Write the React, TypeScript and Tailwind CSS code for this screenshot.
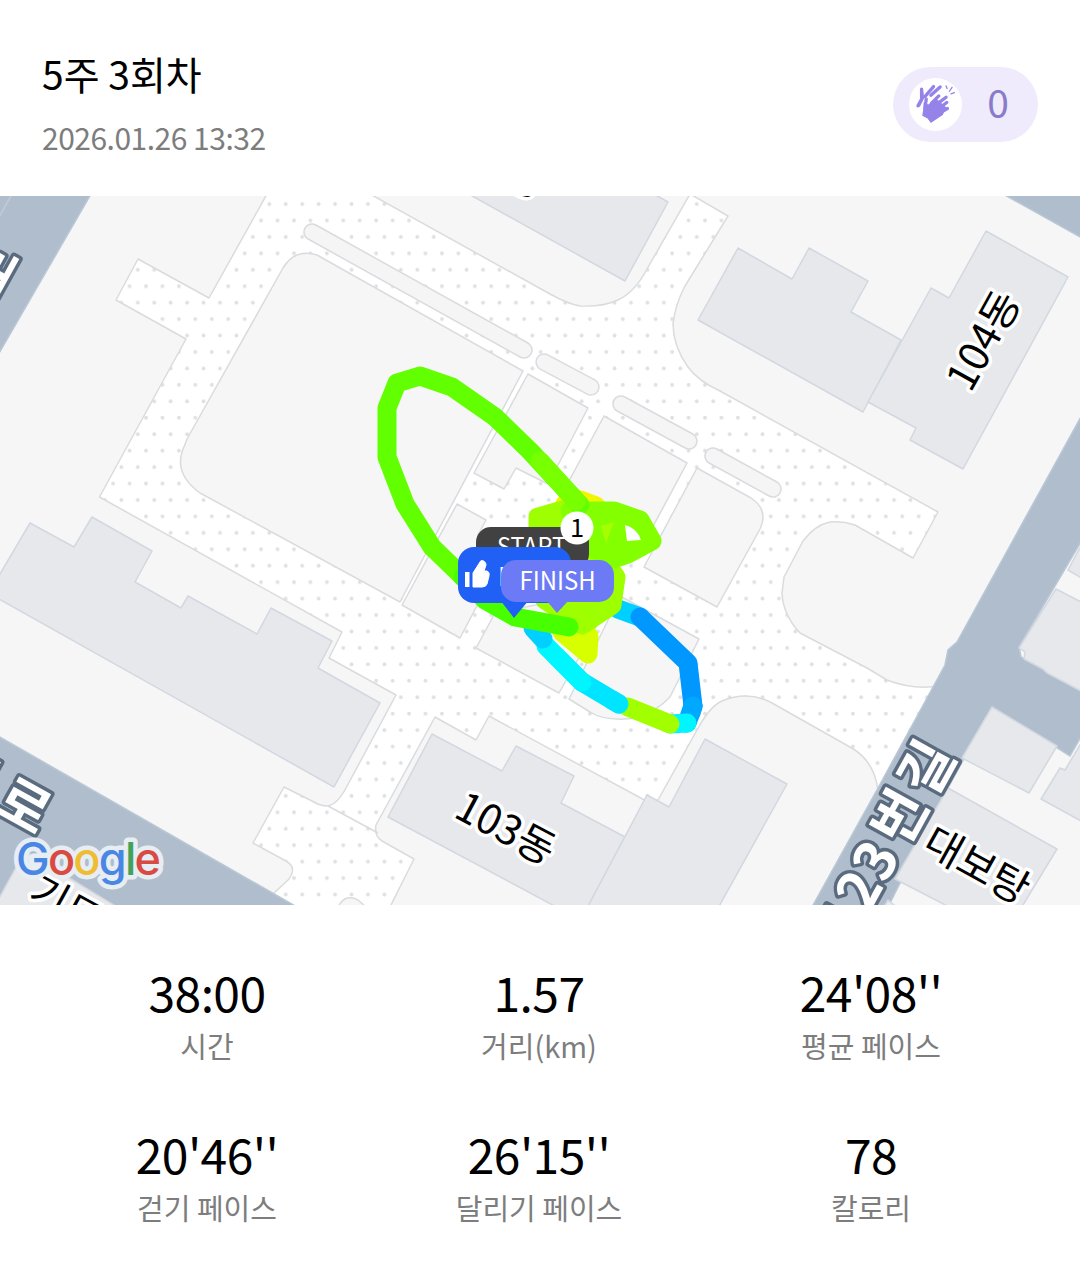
import type { ReactNode } from 'react';

const FONT = "font-['Noto_Sans_CJK_KR','Noto_Sans',sans-serif]";

const STATS = [
  { value: '38:00', label: '시간' },
  { value: '1.57', label: '거리(km)' },
  { value: "24'08''", label: '평균 페이스' },
  { value: "20'46''", label: '걷기 페이스' },
  { value: "26'15''", label: '달리기 페이스' },
  { value: '78', label: '칼로리' },
];

export default function App() {
  return (
    <main className={`flex h-[1267px] w-[1080px] flex-col bg-white text-black ${FONT}`}>
      <header className="flex h-[196px] items-start justify-between px-[42px] pt-11">
        <div>
          <h1 className="text-[39px] leading-[58px]">5주 3회차</h1>
          <p className="mt-[14px] text-[30px] leading-[42px] tracking-[-0.5px] text-[#7d7d7d]">2026.01.26 13:32</p>
        </div>
        <div className="mt-[23px] flex h-[75px] w-[145px] items-center rounded-full bg-[#efebfd] pl-4">
          <span className="flex size-[53px] items-center justify-center rounded-full bg-white">
            <ClapIcon />
          </span>
          <span className="w-[72px] pb-[7px] text-center text-[39px] leading-none text-[#8a7bc8]">0</span>
        </div>
      </header>

      <RouteMap />

      <section className="grid grid-cols-3 gap-y-[40px] pt-[52px] pr-[43px] pl-[41px]">
        {STATS.map((s) => (
          <div key={s.label} className="h-[122px] text-center">
            <div className="text-[48px] leading-[68px] tracking-[-0.6px]">{s.value}</div>
            <div className="text-[29px] leading-[40px] text-[#7d7d7d]">{s.label}</div>
          </div>
        ))}
      </section>
    </main>
  );
}

function ClapIcon() {
  return (
    <svg viewBox="0 0 160 160" className="size-[53px]" fill="none" strokeLinecap="round" strokeLinejoin="round">
      <g stroke="#9583ea" strokeWidth="10">
        <path d="M38 34V64L27 84" />
        <path d="M48 56L74 26M66 52L94 27" />
      </g>
      <path d="M42 34L46 60L32 88L28 80L36 60Z" fill="#9583ea" />
      <path d="M44 88V74L58 80L82 62L112 88L102 112L86 122L66 136L56 122L40 114Z" fill="#9583ea" />
      <g stroke="#9583ea" strokeWidth="10">
        <path d="M48 92L52 64M68 76L90 54M80 82L112 58M90 92L114 74M92 106L116 92" />
      </g>
      <path d="M112 24L115 32M122 40L130 28M127 48L137 44" stroke="#9583ea" strokeWidth="4" />
    </svg>
  );
}

function RouteMap() {
  return (
    <svg viewBox="0 196 1080 709" className="h-[709px] w-[1080px] shrink-0">
      <defs>
        <pattern id="dots" x="261.1" y="195.8" width="16.44" height="32.88" patternUnits="userSpaceOnUse">
          <circle cx="8.22" cy="8.22" r="1.9" fill="#dee1e3" />
          <circle cx="0" cy="24.66" r="1.9" fill="#dee1e3" />
          <circle cx="16.44" cy="24.66" r="1.9" fill="#dee1e3" />
        </pattern>
      </defs>
      <rect y="196" width="1080" height="709" fill="#f6f6f6" />
      <Plaza />
      <Roads />
      <Buildings />
      <Labels />
      <Route />
      <Markers />
      <GoogleMark />
    </svg>
  );
}

const PLAZA =
  'M267 194L209 298L138 259L116 300L186 339L99.500 497L342 632L329 658L396 695L346 788Q337 805 327 806Q320 806 312 801L284 787L253 843L286 861Q298 868 288 880L273 894L293 907H338Q345 893 358 900L366 907H390L414 859L382 841Q374 836 376 825L435 717L476 740L489 716L650 803L658 800L697 730Q710 706 722 701Q748 690 772 703L850 747Q874 760 878 790L940 686Q912 690 887 680L867 668L800 633Q783 615 782 593L784 577L803 541Q815 525 830 522Q843 521 855 525L913 558L938 512L720 391Q698 381 688 367Q673 346 673 324Q675 305 685 286L728 216L690 194L647 269Q635 292 618 300Q603 307 580 306Q568 304 550 294L370 194Z';

const ISLANDS = [
  'M283 268Q295 248 317 255L523 371L400 602L200 493Q175 475 182 452L187 439Z',
  'M528 374L588 408L548 484L516 468L504 489L474 473Z',
  'M457 504L486 520L478 535L500 562L460 638L402 605Z',
  'M495 613L476 648L559 693L600 620L560 600Z',
  'M620 596L699 639L670 697Q658 710 637 718Q605 722 590 712L569 699Z',
  'M604 416L687 463L643 545L548 520Z',
  'M697 468L751 498Q769 510 760 529L717 607L644 567Z',
];

const PLANTERS = ['M312 232L524 350', 'M544 362L591 387', 'M621 404L689 441', 'M713 456L773 489'];

function Plaza() {
  return (
    <g strokeLinejoin="round">
      <path d={PLAZA} fill="#fff" />
      <path d={PLAZA} fill="url(#dots)" stroke="#d9dbde" strokeWidth="1.500" />
      <path d="M328 806L378 833" stroke="#d9dbde" strokeWidth="1.500" />
      {ISLANDS.map((d) => (
        <path key={d} d={d} fill="#f6f6f6" stroke="#d9dbde" strokeWidth="1.500" />
      ))}
      {PLANTERS.map((d) => (
        <g key={d} strokeLinecap="round">
          <path d={d} stroke="#d9dbde" strokeWidth="17.500" />
          <path d={d} stroke="#f5f5f5" strokeWidth="14.500" />
        </g>
      ))}
    </g>
  );
}

function Roads() {
  return (
    <g fill="#b0bdcc" stroke="#b9c8d6" strokeWidth="1.500">
      <path d="M-2 194H91L-2 355Z" />
      <path d="M1003 194H1082V238Z" />
      <path d="M1082 415L957 642L948 650L945 665L878 788L812 907H888L948 788L992 707L1070 756L1082 735V692L1021 657L1019 647L1082 540Z" />
      <path d="M-2 736L297 907H-2Z" />
      <path d="M12 194L-2 219" stroke="#c3ccd3" fill="none" />
    </g>
  );
}

const BUILDINGS = [
  'M465 192L625 281L668 202L650 192Z',
  'M698 320L738 248L792 279L809 248L868 281L851 312L901 340L863 412Z',
  'M986 231L1068 277L963 469L910 440L916 428L868 402L931 288L949 298Z',
  'M-3 598V579L30 523L74 547L92 517L152 551L135 582L181 608L188 596L257 634L271 608L332 641L318 668L380 703L334 787Z',
  'M388 817L432 734L502 771L516 746L574 776L561 803L625 837L586 910H562Z',
  'M586 910L647 795L669 807L705 739L787 784L717 910Z',
  'M1068 570L1083 542V579Z',
  'M1056 589L1083 603V692L1047 673L1043 669L1024 659L1025 652L1019 648Z',
  'M992 707L1057 746L1029 793L962 758Z',
  'M1083 740L1065 770L1060 768L1041 799L1083 822Z',
  'M948 788L1057 849L1020 910H955L895 879Z',
  'M888 900L900 910H882Z',
  'M-3 902L25 851L122 910H-3Z',
];

function Buildings() {
  return (
    <g fill="#e6e8eb" stroke="#d2d8e0" strokeWidth="1.500" strokeLinejoin="round">
      {BUILDINGS.map((d) => (
        <path key={d} d={d} />
      ))}
    </g>
  );
}

function Label({ x, y, angle, children }: { x: number; y: number; angle: number; children: ReactNode }) {
  return (
    <text
      transform={`translate(${x} ${y}) rotate(${angle})`}
      textAnchor="middle"
      dy="15"
      fontSize="41"
      fill="#000"
      stroke="#fff"
      strokeWidth="7"
      strokeLinejoin="round"
      paintOrder="stroke"
    >
      {children}
    </text>
  );
}

function Labels() {
  return (
    <g>
      <Label x={983} y={340} angle={-61}>104동</Label>
      <Label x={506} y={828} angle={28}>103동</Label>
      <Label x={977} y={865} angle={29}>대보탕</Label>
      <Label x={496} y={162} angle={28}>105동</Label>
      <Label x={66} y={905} angle={29}>기모</Label>
      <g fontSize="56" fontWeight="700" fill="#fff" stroke="#5a6b7f" strokeWidth="7" strokeLinejoin="round" paintOrder="stroke">
        <text transform="translate(927 768) rotate(-61)" x="-190 -156 -122 -82 -26" y="20">123번길</text>
        <text transform="translate(24 806) rotate(29)" x="-88 -26" y="20">대로</text>
        <text transform="translate(-9 270) rotate(-61)" x="-26" y="20">로</text>
      </g>
    </g>
  );
}

function Route() {
  return (
    <g fill="none" strokeWidth="19" strokeLinecap="round" strokeLinejoin="round">
      <path d="M618 609L640 617" stroke="#00d0ff" />
      <path d="M693 706L687 723" stroke="#00a8ff" />
      <path d="M640 617L688 663L693 706" stroke="#0098ff" />
      <path d="M693 706L691 713" stroke="#00a8ff" />
      <path d="M687 723L670 724" stroke="#00f6ff" />
      <path d="M546 646L582 682" stroke="#00f6ff" />
      <path d="M533 628L543 639" stroke="#00d0ff" />
      <path d="M582 682L619 704" stroke="#00e5ff" />
      <path d="M670 724L628 707" stroke="#a2ff00" />
      <path d="M612 700L619 704" stroke="#00e5ff" />
      <path d="M556 656L582 682" stroke="#00f6ff" />
      <path d="M562 632L588 654L589 636Z" fill="#d8ff00" stroke="#d8ff00" />
      <path d="M565 504L580 500L596 506" stroke="#f2f500" />
      <path d="M538 530V517L562 510L600 530V555L616 577L612 605L582 625L545 600L560 560Z" fill="#9dff00" stroke="#9dff00" />
      <path d="M570 511L614 511L640 520L652 541L628 554L610 560L590 545Z" fill="#84ff00" stroke="#84ff00" />
      <path d="M601 526L614 522L606 543Z" fill="#a6ff00" />
      <path d="M580 505L530 451L495 417L452 387L420 376L397 383L387 408V457L405 504L432 547L463 577" stroke="#62ff00" />
      <path d="M576 501L540 461" stroke="#78ff00" />
      <path d="M463 577L485 600L515 617L569 627" stroke="#48ff00" />
      <path d="M625 525Q637 528 641 540L627 541Z" fill="#fff" />
    </g>
  );
}

function Markers() {
  return (
    <g fontSize="25.500" fill="#fff">
      <rect x="476" y="527" width="113" height="42" rx="15" fill="#414141" />
      <text x="497" y="556" textLength="69" lengthAdjust="spacingAndGlyphs">START</text>
      <path d="M500 600L514 618L529 600Z" fill="#2060f5" />
      <rect x="458" y="547" width="113" height="56" rx="16" fill="#2060f5" />
      <path d="M465 572H469.500V587H465Z" />
      <path d="M473 573L480 562C481 559 486 561 486 565L484 571H487Q490 572 489 576L487 584Q486 587 482 587H473Z" stroke="#fff" />
      <text x="498" y="586">BEST</text>
      <path d="M546 600L557 613L569 600Z" fill="#6c7af5" />
      <rect x="501" y="560" width="113" height="42" rx="15" fill="#6c7af5" />
      <text x="519.500" y="589.500" textLength="76" lengthAdjust="spacingAndGlyphs">FINISH</text>
      <circle cx="577" cy="528" r="16.500" fill="#fff" />
      <text x="577" y="536.500" textAnchor="middle" fill="#000">1</text>
    </g>
  );
}

function GoogleMark() {
  const letters = (
    <>
      <tspan fill="#4a86e4">G</tspan>
      <tspan fill="#d94b42">o</tspan>
      <tspan fill="#efbd33">o</tspan>
      <tspan fill="#4a86e4">g</tspan>
      <tspan fill="#43a25a">l</tspan>
      <tspan fill="#d94b42">e</tspan>
    </>
  );
  return (
    <g className="font-['Inter','Roboto',sans-serif]" fontSize="45" fontWeight="500">
      <text x="16" y="875" textLength="145" stroke="#e6edf3" strokeWidth="9" strokeLinejoin="round">{letters}</text>
      <text x="16" y="875" textLength="145">{letters}</text>
    </g>
  );
}
